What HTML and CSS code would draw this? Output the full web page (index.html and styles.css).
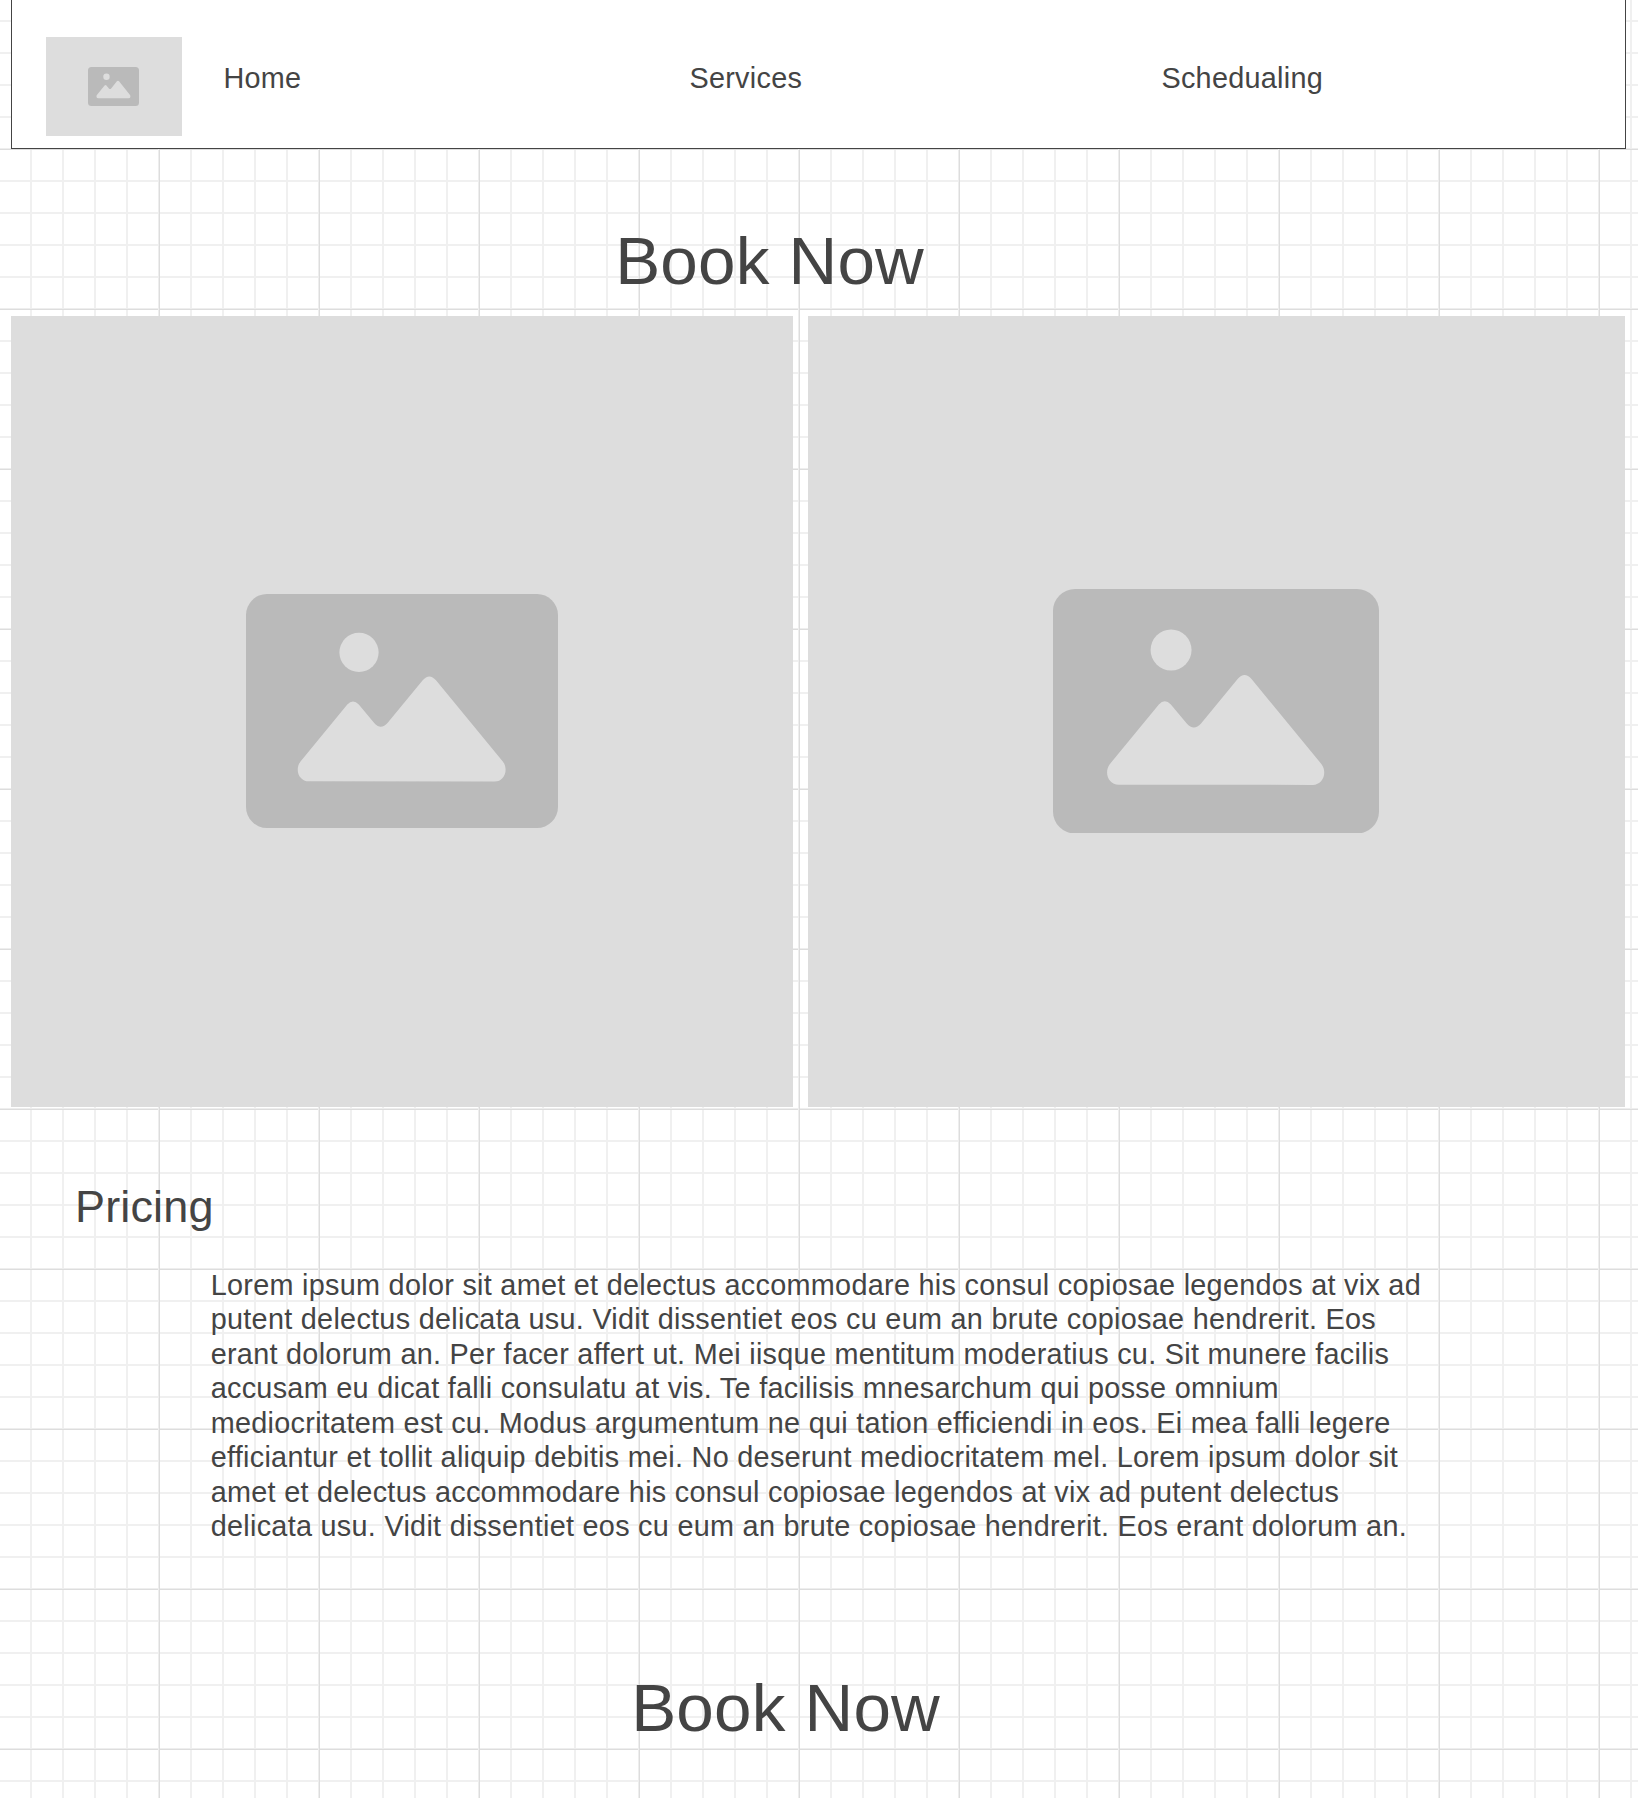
FILE: index.html
```html
<!DOCTYPE html>
<html lang="en">
<head>
<meta charset="utf-8">
<title>Book Now</title>
<link rel="stylesheet" href="styles.css">
</head>
<body>
<svg class="defs" aria-hidden="true">
  <symbol id="picture" viewBox="0 0 312 234" preserveAspectRatio="none">
    <rect width="312" height="234" rx="21" fill="#bababa"/>
    <circle cx="113" cy="58.4" r="19.6" fill="#ddd"/>
    <path fill="#ddd" d="M63 187.3C53 187.3 48.500 176 54.300 167.700L101.300 110.500Q107 104.300 112.800 110.500L128 128.700Q134.700 136.600 141.700 128.700L176.700 86.200Q183.300 78.600 190 86.200L257 167.700C263 176 258 187.500 248.700 187.500Z"/>
  </symbol>
</svg>
<header class="header">
  <a class="logo"><svg class="logo-icon"><use href="#picture"/></svg></a>
  <nav class="nav">
    <a>Home</a>
    <a>Services</a>
    <a>Schedualing</a>
  </nav>
</header>
<main>
  <h1 class="title">Book Now</h1>
  <div class="gallery">
    <div class="photo"><svg class="photo-icon"><use href="#picture"/></svg></div>
    <div class="photo photo-wide"><svg class="photo-icon"><use href="#picture"/></svg></div>
  </div>
  <section class="pricing">
    <h2 class="subtitle">Pricing</h2>
    <p class="copy">Lorem ipsum dolor sit amet et delectus accommodare his consul copiosae legendos at vix ad<br>
    putent delectus delicata usu. Vidit dissentiet eos cu eum an brute copiosae hendrerit. Eos<br>
    erant dolorum an. Per facer affert ut. Mei iisque mentitum moderatius cu. Sit munere facilis<br>
    accusam eu dicat falli consulatu at vis. Te facilisis mnesarchum qui posse omnium<br>
    mediocritatem est cu. Modus argumentum ne qui tation efficiendi in eos. Ei mea falli legere<br>
    efficiantur et tollit aliquip debitis mei. No deserunt mediocritatem mel. Lorem ipsum dolor sit<br>
    amet et delectus accommodare his consul copiosae legendos at vix ad putent delectus<br>
    delicata usu. Vidit dissentiet eos cu eum an brute copiosae hendrerit. Eos erant dolorum an.</p>
  </section>
  <h2 class="title title-bottom">Book Now</h2>
</main>
</body>
</html>
```
FILE: styles.css
```css
* { box-sizing: border-box; }

body {
  margin: 0;
  height: 1798px;
  overflow: hidden;
  color: #444;
  font-family: "Liberation Sans", Arial, sans-serif;
  background-color: #fff;
  background-image:
    linear-gradient(90deg, #eee 1px, #ddd 1px, #ddd 2px, transparent 2px),
    linear-gradient(#eee 1px, #ddd 1px, #ddd 2px, transparent 2px),
    linear-gradient(90deg, #f0f0f0 2px, transparent 2px),
    linear-gradient(#f0f0f0 2px, transparent 2px);
  background-size: 160px 160px, 160px 160px, 32px 32px, 32px 32px;
  background-position: 158px 0, 0 148px, 30px 0, 0 20px;
}

.defs { display: none; }

.header {
  display: flex;
  align-items: flex-start;
  width: 1615px;
  height: 149px;
  margin-left: 11px;
  padding: 37px 0 0 34px;
  background: #fff;
  border: solid #444;
  border-width: 0 1px 1px;
}

.logo {
  display: flex;
  align-items: center;
  justify-content: center;
  width: 136px;
  height: 99px;
  background: #ddd;
}

.logo-icon { width: 51px; height: 39px; margin-right: 1px; }

.nav {
  display: grid;
  grid-template-columns: 466px 472px 300px;
  margin: 24px 0 0 41.400px;
  font-size: 28.800px;
  line-height: 34px;
  letter-spacing: 0.290px;
}

.title {
  margin: 71px 0 0 615.200px;
  font-size: 67.400px;
  font-weight: 400;
  line-height: 81px;
  letter-spacing: 0.200px;
}

.gallery {
  display: grid;
  grid-template-columns: 782px 817px;
  gap: 15px;
  height: 791px;
  margin: 15px 0 0 11px;
}

.photo {
  display: flex;
  align-items: center;
  justify-content: center;
  background: #ddd;
}

.photo-icon { width: 312px; aspect-ratio: 4 / 3; margin-bottom: 1px; }

.photo-wide .photo-icon { width: 326px; margin-right: 1px; }

.pricing { padding: 73px 0 0 75px; }

.subtitle {
  margin: 0;
  font-size: 45px;
  font-weight: 400;
  line-height: 54px;
  letter-spacing: 0.150px;
}

.copy {
  margin: 34px 0 0 135.700px;
  font-size: 28.800px;
  line-height: 34.430px;
  letter-spacing: 0.290px;
  white-space: nowrap;
}

.title-bottom { margin: 123px 0 0 631.200px; }
```
